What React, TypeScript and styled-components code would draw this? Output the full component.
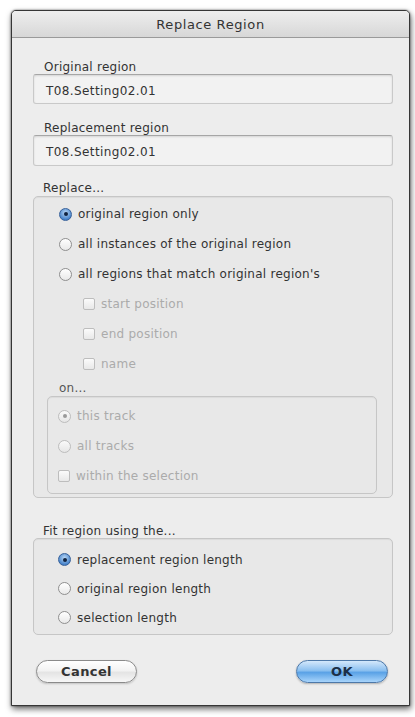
import React from "react";
import styled, { createGlobalStyle, css } from "styled-components";

const Global = createGlobalStyle`
  html, body { margin: 0; padding: 0; background: #ffffff; }
  body { font-family: "DejaVu Sans", "Liberation Sans", sans-serif; }
`;

const Page = styled.div`
  padding: 10px 0 0 11px;
  width: 415px;
  height: 717px;
  box-sizing: border-box;
`;

const Window = styled.div`
  width: 399px;
  height: 696px;
  box-sizing: border-box;
  display: flex;
  flex-direction: column;
  background: #ededed;
  border: 1px solid #363636;
  border-radius: 5px 5px 0 0;
  box-shadow: 1px 3px 6px rgba(0, 0, 0, 0.6), 0 0 2px rgba(0, 0, 0, 0.6);
  overflow: hidden;
`;

const TitleBar = styled.div`
  height: 26px;
  flex: none;
  display: flex;
  align-items: center;
  justify-content: center;
  background: linear-gradient(#eeeeee, #d7d7d7);
  border-bottom: 1px solid #9a9a9a;
  font-size: 13px;
  color: #333333;
  letter-spacing: 0.6px;
`;

const Body = styled.div`
  flex: 1;
  display: flex;
  flex-direction: column;
  padding: 22px 16px 0 21px;
`;

const Label = styled.div<{ $indent?: number; $top?: number; $muted?: boolean }>`
  font-size: 12px;
  line-height: 14px;
  height: 14px;
  letter-spacing: 0.25px;
  color: ${(p) => (p.$muted ? "#555555" : "#333333")};
  padding-left: ${(p) => p.$indent ?? 11}px;
  margin-top: ${(p) => p.$top ?? 0}px;
`;

const Field = styled.div<{ $h: number }>`
  height: ${(p) => p.$h}px;
  box-sizing: border-box;
  display: flex;
  align-items: center;
  padding-left: 12px;
  padding-top: 3px;
  background: #f2f2f2;
  border: 1px solid #c9c9c9;
  border-top-color: #a6a6a6;
  border-radius: 3px;
  box-shadow: inset 0 1px 2px rgba(0, 0, 0, 0.12);
  font-size: 12px;
  letter-spacing: 0.4px;
  color: #333333;
`;

const Group = styled.div<{ $pt: number; $pb: number; $mx?: string }>`
  box-sizing: border-box;
  display: flex;
  flex-direction: column;
  padding: ${(p) => p.$pt}px 0 ${(p) => p.$pb}px 0;
  margin: ${(p) => p.$mx ?? "0"};
  background: #e8e8e8;
  border: 1px solid #c6c6c6;
  border-radius: 5px;
  box-shadow: inset 0 1px 1px rgba(0, 0, 0, 0.06);
`;

const Row = styled.div<{ $h: number; $indent: number; $disabled?: boolean }>`
  height: ${(p) => p.$h}px;
  display: flex;
  align-items: center;
  gap: 6px;
  padding-left: ${(p) => p.$indent}px;
  font-size: 12px;
  letter-spacing: 0.25px;
  color: ${(p) => (p.$disabled ? "#ababab" : "#333333")};
`;

const RadioDot = styled.span<{ $on?: boolean; $disabled?: boolean }>`
  width: 13px;
  height: 13px;
  box-sizing: border-box;
  border-radius: 50%;
  flex: none;
  display: flex;
  align-items: center;
  justify-content: center;
  ${(p) =>
    p.$on && !p.$disabled
      ? css`
          background: radial-gradient(circle at 50% 35%, #b9d7f5, #4a86cc 70%, #2f62a8);
          border: 1px solid #36609a;
        `
      : p.$disabled
      ? css`
          background: linear-gradient(#fafafa, #e6e6e6);
          border: 1px solid #bdbdbd;
        `
      : css`
          background: linear-gradient(#ffffff, #e9e9e9);
          border: 1px solid #8f8f8f;
        `}
  &::after {
    content: "";
    display: ${(p) => (p.$on ? "block" : "none")};
    width: 4px;
    height: 4px;
    border-radius: 50%;
    background: ${(p) => (p.$disabled ? "#9a9a9a" : "#10233f")};
  }
`;

const Check = styled.span`
  width: 12px;
  height: 12px;
  box-sizing: border-box;
  flex: none;
  border: 1px solid #bdbdbd;
  border-radius: 2px;
  background: linear-gradient(#fbfbfb, #e8e8e8);
`;

const Buttons = styled.div`
  margin-top: 25px;
  display: flex;
  justify-content: space-between;
  padding: 0 5px 0 3px;
`;

const Button = styled.div<{ $primary?: boolean; $w: number }>`
  width: ${(p) => p.$w}px;
  height: 23px;
  box-sizing: border-box;
  border-radius: 12px;
  display: flex;
  align-items: center;
  justify-content: center;
  font-size: 13px;
  font-weight: bold;
  letter-spacing: 0.4px;
  ${(p) =>
    p.$primary
      ? css`
          background: linear-gradient(#d4e8fb 0%, #8cc0f0 45%, #5aa2e6 55%, #a8d4fb 100%);
          border: 1px solid #4d78a8;
          color: #1c2f47;
          box-shadow: 0 1px 2px rgba(0, 0, 0, 0.25);
        `
      : css`
          background: linear-gradient(#ffffff 0%, #f3f3f3 45%, #e4e4e4 55%, #f7f7f7 100%);
          border: 1px solid #8a8a8a;
          color: #333333;
          box-shadow: 0 1px 2px rgba(0, 0, 0, 0.18);
        `}
`;

type Item = { kind: "radio" | "check"; label: string; on?: boolean; disabled?: boolean; indent: number };

const Option: React.FC<{ item: Item; h: number }> = ({ item, h }) => (
  <Row $h={h} $indent={item.indent} $disabled={item.disabled}>
    {item.kind === "radio" ? <RadioDot $on={item.on} $disabled={item.disabled} /> : <Check />}
    <span>{item.label}</span>
  </Row>
);

const replaceItems: Item[] = [
  { kind: "radio", label: "original region only", on: true, indent: 25 },
  { kind: "radio", label: "all instances of the original region", indent: 25 },
  { kind: "radio", label: "all regions that match original region's", indent: 25 },
  { kind: "check", label: "start position", disabled: true, indent: 49 },
  { kind: "check", label: "end position", disabled: true, indent: 49 },
  { kind: "check", label: "name", disabled: true, indent: 49 },
];

const onItems: Item[] = [
  { kind: "radio", label: "this track", on: true, disabled: true, indent: 10 },
  { kind: "radio", label: "all tracks", disabled: true, indent: 10 },
  { kind: "check", label: "within the selection", disabled: true, indent: 10 },
];

const fitItems: Item[] = [
  { kind: "radio", label: "replacement region length", on: true, indent: 24 },
  { kind: "radio", label: "original region length", indent: 24 },
  { kind: "radio", label: "selection length", indent: 24 },
];

export default function App() {
  return (
    <Page>
      <Global />
      <Window>
        <TitleBar>Replace Region</TitleBar>
        <Body>
          <Label>Original region</Label>
          <Field $h={30}>T08.Setting02.01</Field>
          <Label $top={17}>Replacement region</Label>
          <Field $h={31}>T08.Setting02.01</Field>
          <Label $top={15} $indent={10}>Replace...</Label>
          <Group $pt={2} $pb={3} $mx="1px 0 0 0">
            {replaceItems.map((it) => (
              <Option key={it.label} item={it} h={30} />
            ))}
            <Label $indent={25} $top={2} $muted>on...</Label>
            <Group $pt={4} $pb={2} $mx="1px 15px 0 13px">
              {onItems.map((it) => (
                <Option key={it.label} item={it} h={30} />
              ))}
            </Group>
          </Group>
          <Label $top={26} $indent={10}>Fit region using the...</Label>
          <Group $pt={6} $pb={2}>
            {fitItems.map((it) => (
              <Option key={it.label} item={it} h={29} />
            ))}
          </Group>
          <Buttons>
            <Button $w={101}>Cancel</Button>
            <Button $w={92} $primary>
              OK
            </Button>
          </Buttons>
        </Body>
      </Window>
    </Page>
  );
}
